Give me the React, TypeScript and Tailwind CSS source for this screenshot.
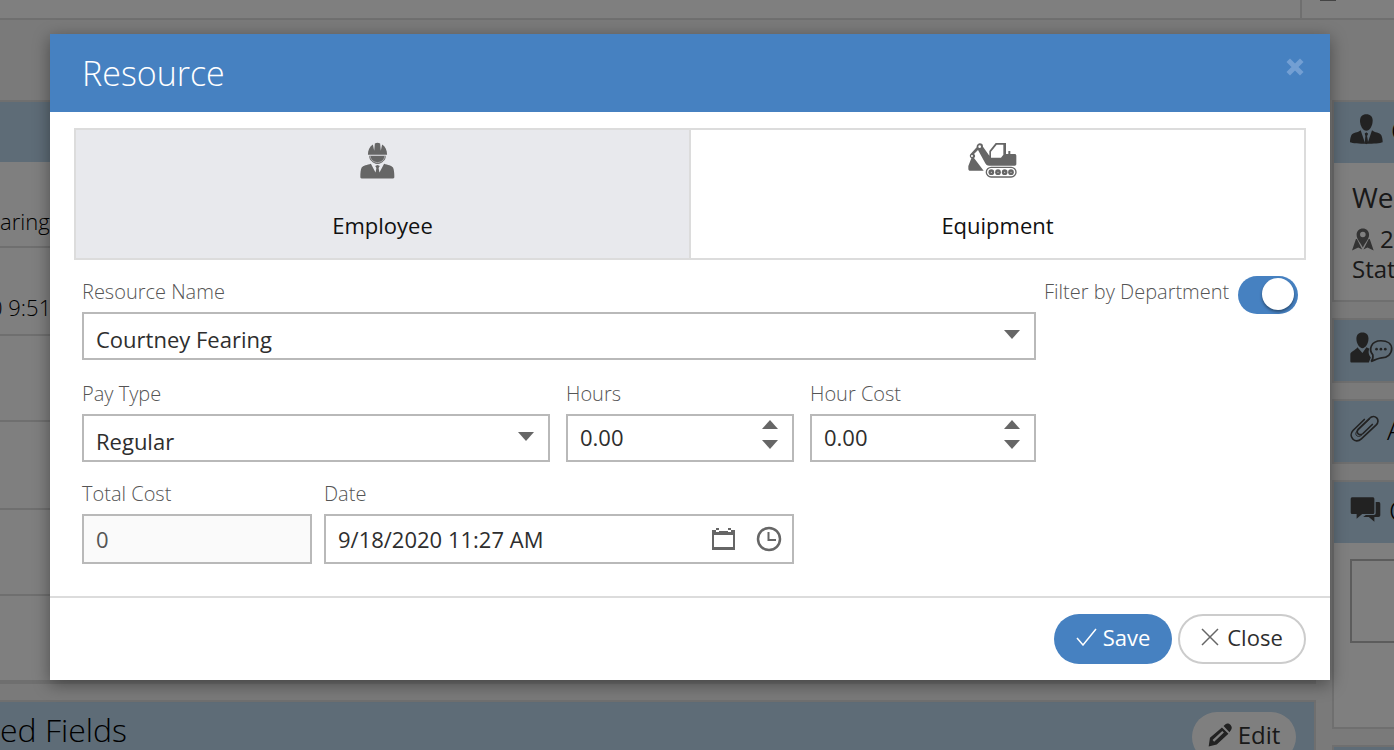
import { useState } from "react";
import type { ReactNode } from "react";

const fieldClass =
  "w-full border-2 border-[#b9b9b9] bg-white pl-3 text-[22px] leading-7 text-[#2e2e2e] outline-none";

function WorkerIcon() {
  return (
    <svg viewBox="59 66 106 111" className="h-[37px] w-[35px]" fill="#666" aria-hidden="true">
      <path d="M83 104c0-14 5-25 15-31l4 19 2-22c5-3 11-3 16 0l2 22 4-19c10 6 15 17 15 31z" />
      <path d="M87 107h50c0 9-3 13-7 16-4 5-10 9-18 9s-14-4-18-9c-4-3-7-7-7-16z" />
      <path d="M90 108c1 11 8 18 22 20 14-2 21-9 22-20" fill="none" stroke="#e8e9ed" strokeWidth="1.5" />
      <path d="M92 131l14 27 3-14-4-6 7-3 7 3-4 6 3 14 14-27c11 4 23 5 27 12 3 6 4 17 4 28 0 3-1 5-4 5H64c-3 0-4-2-4-5 0-11 1-22 4-28 4-7 17-8 28-12z" />
      <path d="M108 138h8l-2 6 3 23-5 5-5-5 3-23z" />
    </svg>
  );
}

function ExcavatorIcon() {
  return (
    <svg viewBox="83 67 147 108" className="h-9 w-[49px]" fill="#666" aria-hidden="true">
      <path
        fillRule="evenodd"
        d="M118 71a10 10 0 0 1 10 10l19 27V94l19-24h31v33h7v-9h6v9h13c3 0 5 2 5 5v25c0 3-2 5-5 5h-76c-7 0-10-4-13-9L113 91l-12 12a7 7 0 0 1 0 12l29 38H90c-4 0-6-2-6-6v-8l9-23a8 8 0 0 1-3-12l19-21a10 10 0 0 1 9-12zm0 6a4 4 0 1 0 0 8 4 4 0 0 0 0-8zM95 106a3 3 0 1 0 0 6 3 3 0 0 0 0-6zM169 75l-17 21v18h30l7-9V75z"
      />
      <rect x="138" y="143" width="89" height="29" rx="14.5" fill="none" stroke="#666" strokeWidth="4" />
      <circle cx="153" cy="157.5" r="8.5" />
      <circle cx="173" cy="157.5" r="8.5" />
      <circle cx="193" cy="157.5" r="8.5" />
      <circle cx="212" cy="157.5" r="8.5" />
      <g fill="#fff">
        <circle cx="153" cy="157.5" r="1.5" />
        <circle cx="173" cy="157.5" r="1.5" />
        <circle cx="193" cy="157.5" r="1.5" />
        <circle cx="212" cy="157.5" r="1.5" />
      </g>
    </svg>
  );
}

function UserTieIcon() {
  return (
    <svg viewBox="86 70 99 93" className="h-[31px] w-[33px] shrink-0" fill="#444" aria-hidden="true">
      <path d="M135 71c12 0 19 7 19 19 0 15-9 30-19 30s-19-15-19-30c0-12 7-19 19-19z" />
      <path d="M118 119l13 38 2-21-3-7 5-4 5 4-3 7 2 21 13-38c8 8 23 5 28 15 3 6 4 15 4 21-14 6-83 6-98 0 0-6 1-15 4-21 5-10 20-7 28-15z" />
      <path d="M131 128h8l-2 8 3 20-5 5-5-5 3-20z" />
    </svg>
  );
}

function MapMarkerIcon() {
  return (
    <svg viewBox="98 410 67 69" className="h-[23px] w-[22px] shrink-0" fill="#666" aria-hidden="true">
      <path
        fillRule="evenodd"
        d="M131 411c11 0 19 8 19 19 0 14-12 24-19 39-7-15-19-25-19-39 0-11 8-19 19-19zm0 10a8 8 0 1 0 0 17 8 8 0 0 0 0-17z"
      />
      <path d="M110 443h3l16 32-12-6-19 9zM152 443h-3l-16 32 12-6 19 9z" />
    </svg>
  );
}

function UserChatIcon() {
  return (
    <svg viewBox="92 64 128 92" className="h-[31px] w-[43px] shrink-0" fill="#444" aria-hidden="true">
      <path d="M129 65c12 0 18 7 18 19 0 14-9 28-18 28s-18-14-18-28c0-12 6-19 18-19z" />
      <path d="M114 109l15 17 12-17 9 5c-5 8-2 19 4 26l-6 15H97c-3 0-4-2-4-5v-20c0-9 15-11 21-21z" />
      <path
        d="M184 90c19 0 32 9 32 24s-13 27-30 27c-10 1-21 6-31 11 5-6 6-14 5-20-14-16-5-42 24-42z"
        fill="none"
        stroke="#444"
        strokeWidth="5"
      />
      <circle cx="171" cy="115" r="4" />
      <circle cx="184" cy="115" r="4" />
      <circle cx="197" cy="115" r="4" />
    </svg>
  );
}

function PaperclipIcon() {
  return (
    <svg
      viewBox="92 308 87 83"
      className="h-7 w-[29px] shrink-0"
      fill="none"
      stroke="#444"
      strokeWidth="5"
      strokeLinecap="round"
      aria-hidden="true"
    >
      <path d="M135 321l-34 33c-16 17 6 43 25 25l44-41c16-16-4-35-20-20l-33 32c-10 11 4 22 14 13l28-27" />
      <path d="M151 320l-38 36c-10 11 3 22 14 12" strokeWidth="3" />
    </svg>
  );
}

function CommentsIcon() {
  return (
    <svg viewBox="89 559 92 76" className="h-[25px] w-[31px] shrink-0" fill="#444" aria-hidden="true">
      <path d="M96 560h60c4 0 6 2 6 6v39c0 4-2 6-6 6h-31l-17 14v-14H96c-4 0-6-2-6-6v-39c0-4 2-6 6-6z" />
      <path d="M166 574h8c4 0 6 2 6 6v34c0 4-2 6-6 6h-12v14l-17-14h-17l8-6h24c4 0 6-2 6-6z" />
    </svg>
  );
}

function PencilIcon() {
  return (
    <svg viewBox="563 425 74 73" className="size-6" fill="#444" aria-hidden="true">
      <path
        fillRule="evenodd"
        d="M606 438l20 20-36 33-25 6 4-27zm1 11l-30 28 5 5 30-28z"
      />
      <path d="M611 434l6-6c10-7 25 7 17 18l-5 7z" />
    </svg>
  );
}

function Caret({ className, up }: { className?: string; up?: boolean }) {
  return (
    <svg viewBox="0 0 16 9" className={`h-[9px] w-4 ${className ?? ""}`} fill="#666" aria-hidden="true">
      <path d={up ? "M0 9L8 0l8 9z" : "M0 0h16L8 9z"} />
    </svg>
  );
}

function Field({ id, label, children }: { id: string; label: string; children: ReactNode }) {
  return (
    <div className="min-w-0">
      <label htmlFor={id} className="block h-9 text-xl leading-8 font-light text-[#555]">
        {label}
      </label>
      <div className="relative">{children}</div>
    </div>
  );
}

function SelectField({ id, label, options }: { id: string; label: string; options: string[] }) {
  return (
    <Field id={id} label={label}>
      <select id={id} className={`${fieldClass} h-12 appearance-none pt-1.5 pr-12`}>
        {options.map((option) => (
          <option key={option}>{option}</option>
        ))}
      </select>
      <Caret className="pointer-events-none absolute top-[18px] right-4" />
    </Field>
  );
}

function NumberField({ id, label }: { id: string; label: string }) {
  const [value, setValue] = useState(0);

  return (
    <Field id={id} label={label}>
      <input
        id={id}
        inputMode="decimal"
        className={`${fieldClass} h-12 pr-12 pb-0.5`}
        value={value.toFixed(2)}
        onChange={(e) => setValue(Number(e.target.value) || 0)}
      />
      <div className="absolute top-1.5 right-4 flex flex-col gap-[11px]">
        <button type="button" aria-label={`Increase ${label}`} onClick={() => setValue(value + 1)}>
          <Caret up className="block" />
        </button>
        <button type="button" aria-label={`Decrease ${label}`} onClick={() => setValue(Math.max(0, value - 1))}>
          <Caret className="block" />
        </button>
      </div>
    </Field>
  );
}

function SidePanel({ icon, title, children }: { icon: ReactNode; title: string; children?: ReactNode }) {
  return (
    <section className="mb-4 border-2 border-r-0 border-[#dedede] bg-white">
      <h2 className="flex h-[61px] items-center gap-2 overflow-hidden bg-[#bcd8ee] pb-1.5 pl-4 text-[28px] leading-8 font-light whitespace-nowrap">
        {icon}
        {title}
      </h2>
      {children}
    </section>
  );
}

function WorkOrderPage() {
  return (
    <div className="h-full overflow-hidden bg-[#f5f5f5] text-black" aria-hidden="true">
      <div className="flex h-5 justify-end border-b-2 border-[#dedede] bg-white">
        <div className="w-[94px] border-l-2 border-[#dedede] pl-[18px]">
          <div className="h-px w-4 bg-[#888]" />
        </div>
      </div>

      <div className="flex gap-4 pt-20">
        <div className="min-w-0 flex-1">
          <section className="mb-4 border-2 border-l-0 border-[#dedede] bg-white text-[22px] leading-7 font-light whitespace-nowrap">
            <div className="h-[60px] bg-[#bcd8ee]" />
            <div className="flex h-[86px] items-end border-b-2 border-[#dedede] pb-[11px]">aring</div>
            <div className="flex h-[88px] items-end border-b-2 border-[#dedede] pb-[13px]">
              <span className="-ml-2.5">0 9:51</span>
            </div>
            <div className="h-[86px] border-b-2 border-[#dedede]" />
            <div className="h-[88px] border-b-2 border-[#dedede]" />
            <div className="h-[86px] border-b-2 border-[#dedede]" />
            <div className="h-[86px] border-b-2 border-[#dedede]" />
          </section>

          <section className="border-2 border-l-0 border-[#dedede]">
            <div className="flex h-20 items-start justify-between bg-[#bcd8ee] pt-2.5 pr-[18px]">
              <h2 className="text-[32px] leading-9 font-light whitespace-nowrap">ed Fields</h2>
              <button
                type="button"
                tabIndex={-1}
                className="flex h-[50px] w-[104px] items-center justify-center gap-1.5 rounded-full bg-white pb-1 text-2xl text-[#333]"
              >
                <PencilIcon />
                Edit
              </button>
            </div>
          </section>
        </div>

        <aside className="w-[62px] shrink-0">
          <SidePanel icon={<UserTieIcon />} title="Customer">
            <div className="h-[137px] overflow-hidden pt-3.5 pl-[18px] whitespace-nowrap text-[#333]">
              <div className="text-[28px] leading-10">Wells</div>
              <div className="flex h-11 items-center gap-1.5 text-2xl">
                <MapMarkerIcon />
                2100
              </div>
              <div className="-mt-1.5 text-2xl leading-7">State</div>
            </div>
          </SidePanel>
          <SidePanel icon={<UserChatIcon />} title="" />
          <SidePanel icon={<PaperclipIcon />} title="Attachments" />
          <SidePanel icon={<CommentsIcon />} title="Comments">
            <div className="h-[184px] pt-4 pl-4">
              <div className="h-[84px] border-2 border-r-0 border-[#b9b9b9]" />
            </div>
          </SidePanel>
          <SidePanel icon={null} title="" />
        </aside>
      </div>
    </div>
  );
}

export default function App() {
  const [tab, setTab] = useState("Employee");
  const [filter, setFilter] = useState(true);

  const tabs = [
    { name: "Employee", icon: <WorkerIcon /> },
    { name: "Equipment", icon: <ExcavatorIcon /> },
  ];

  return (
    <div className="relative h-screen overflow-hidden font-['Open_Sans',sans-serif]">
      <WorkOrderPage />

      <div className="absolute inset-0 bg-black/50 pt-[34px] pr-16 pl-[50px]">
        <form
          role="dialog"
          aria-labelledby="dialog-title"
          className="bg-white shadow-[0_4px_16px_rgba(0,0,0,0.4)]"
          onSubmit={(e) => e.preventDefault()}
        >
          <header className="flex h-[78px] items-start justify-between bg-[#4681c1] pr-[26px] pl-8 text-white">
            <h1 id="dialog-title" className="text-[34px] leading-[78px] font-light">
              Resource
            </h1>
            <button type="button" aria-label="Close dialog" className="mt-6">
              <svg viewBox="0 0 18 18" className="size-[18px]" aria-hidden="true">
                <path d="M4 4l10 10M14 4L4 14" stroke="#739fd3" strokeWidth="5" strokeLinecap="square" />
              </svg>
            </button>
          </header>

          <div className="px-6 pt-4 pb-8">
            <div role="tablist" className="flex border-2 border-[#dcdcdc]">
              {tabs.map(({ name, icon }) => (
                <button
                  key={name}
                  type="button"
                  role="tab"
                  aria-selected={tab === name}
                  onClick={() => setTab(name)}
                  className={`flex h-32 flex-1 flex-col items-center border-[#dcdcdc] pt-3 text-[22px] leading-[30px] text-[#111] last:border-l-2 ${
                    tab === name ? "bg-[#e8e9ed]" : "bg-white"
                  }`}
                >
                  <span className="flex h-[68px] items-start pr-2.5">{icon}</span>
                  {name}
                </button>
              ))}
            </div>

            <div className="flex items-start gap-2 px-2 pt-4">
              <div className="min-w-0 flex-1">
                <SelectField id="resource" label="Resource Name" options={["Courtney Fearing"]} />

                <div className="mt-[18px] grid grid-cols-[468fr_228fr_226fr] gap-4">
                  <SelectField id="pay-type" label="Pay Type" options={["Regular"]} />
                  <NumberField id="hours" label="Hours" />
                  <NumberField id="hour-cost" label="Hour Cost" />
                </div>

                <div className="mt-4 grid grid-cols-[230fr_470fr_230fr] gap-3">
                  <Field id="total-cost" label="Total Cost">
                    <input
                      id="total-cost"
                      readOnly
                      value="0"
                      className="h-[50px] w-full border-2 border-[#b9b9b9] bg-[#fafafa] pl-3 text-[22px] leading-7 text-[#555] outline-none"
                    />
                  </Field>
                  <Field id="date" label="Date">
                    <input id="date" defaultValue="9/18/2020 11:27 AM" className={`${fieldClass} h-[50px] pr-24`} />
                    <div className="absolute top-3 right-3 flex gap-5">
                      <button type="button" aria-label="Pick a date">
                        <svg viewBox="0 0 25 26" className="h-[26px] w-[25px]" fill="#666" aria-hidden="true">
                          <path fillRule="evenodd" d="M1 4h4v2h3V5h9v1h3V4h4v20H1zm2 5v12h19V9z" />
                          <path d="M5 2h3v2H5zM17 2h3v2h-3z" />
                        </svg>
                      </button>
                      <button type="button" aria-label="Pick a time">
                        <svg viewBox="0 0 26 26" className="size-[26px]" fill="none" stroke="#666" aria-hidden="true">
                          <circle cx="13" cy="13" r="11" strokeWidth="2.5" />
                          <path d="M12.5 6v8H20" strokeWidth="2" />
                        </svg>
                      </button>
                    </div>
                  </Field>
                </div>
              </div>

              <label className="flex w-[254px] items-start justify-between text-xl leading-8 font-light whitespace-nowrap text-[#555]">
                Filter by Department
                <span className="relative h-[38px] w-[60px] shrink-0">
                  <input
                    type="checkbox"
                    role="switch"
                    checked={filter}
                    onChange={(e) => setFilter(e.target.checked)}
                    className="peer block h-full w-full appearance-none rounded-full bg-[#bbb] checked:bg-[#4681c1]"
                  />
                  <span className="pointer-events-none absolute top-0.5 left-1 size-8 rounded-full bg-white shadow-[0_2px_3px_rgba(0,0,0,0.4)] peer-checked:left-6" />
                </span>
              </label>
            </div>
          </div>

          <footer className="flex justify-end gap-1.5 border-t-2 border-[#dcdcdc] px-6 py-4 text-[22px] leading-7">
            <button
              type="submit"
              className="flex h-[50px] w-[118px] items-center justify-center gap-1.5 rounded-full bg-[#4681c1] pb-1 text-white"
            >
              <svg viewBox="0 0 21 18" className="h-[18px] w-[21px]" fill="none" stroke="currentColor" aria-hidden="true">
                <path d="M1 10l6 7L20 1" strokeWidth="1.5" />
              </svg>
              Save
            </button>
            <button
              type="button"
              className="flex h-[50px] w-32 items-center justify-center gap-2 rounded-full border-2 border-[#ccc] pb-1 text-[#2e2e2e]"
            >
              <svg viewBox="0 0 18 18" className="size-[18px]" fill="none" stroke="#666" aria-hidden="true">
                <path d="M1 1l16 16M17 1L1 17" strokeWidth="1.5" />
              </svg>
              Close
            </button>
          </footer>
        </form>
      </div>
    </div>
  );
}
